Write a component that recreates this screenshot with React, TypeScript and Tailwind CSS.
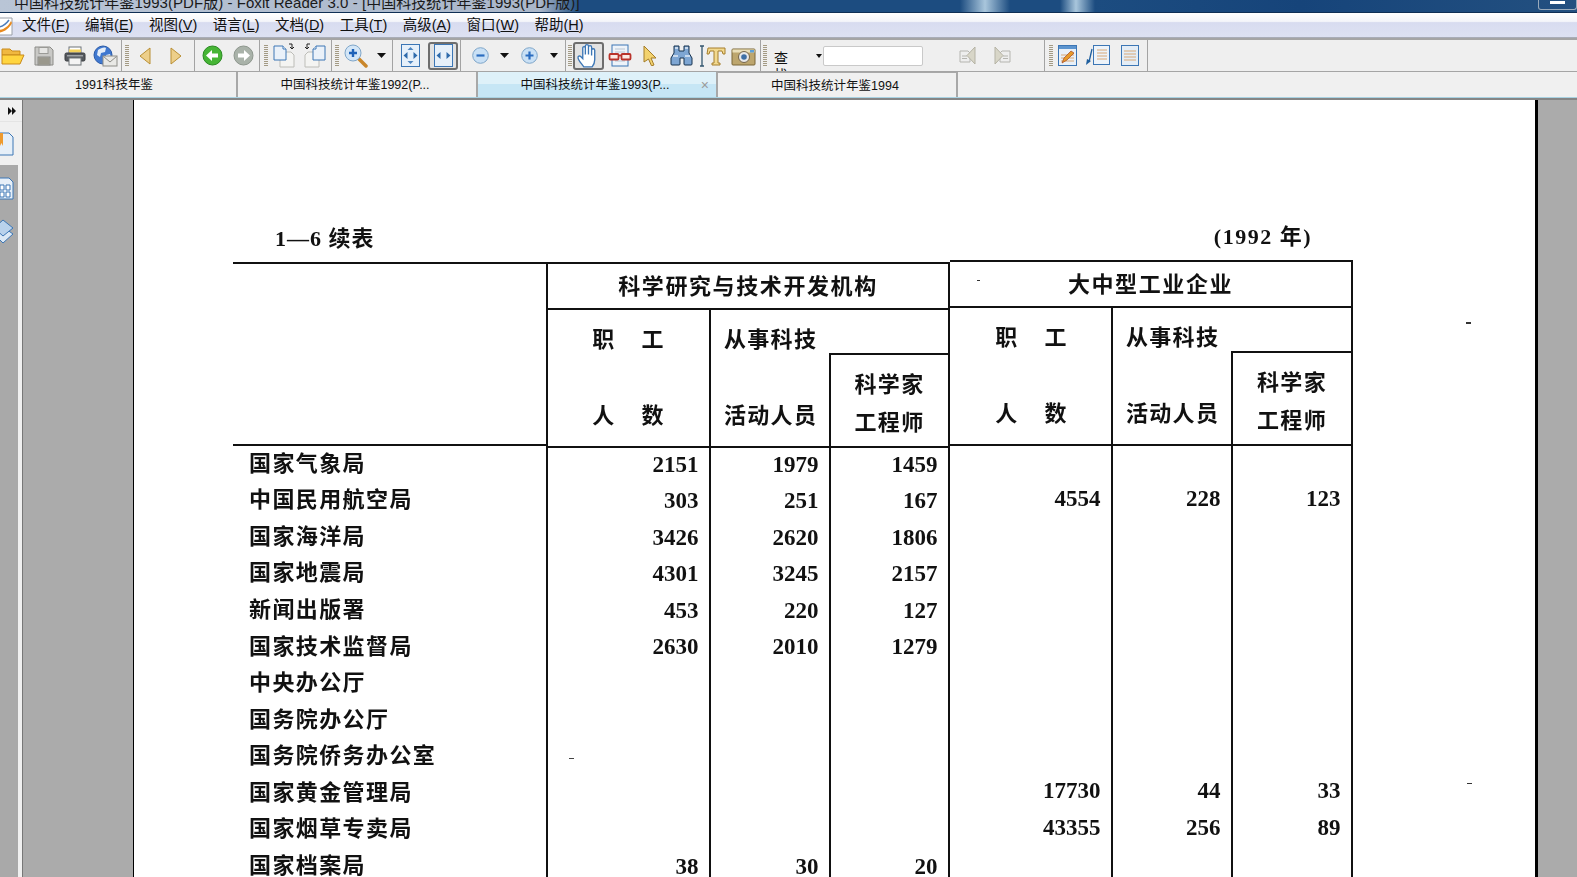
import React from "react";

const UI_FONT = "font-['Liberation_Sans','Noto_Sans_CJK_SC',sans-serif]";
const SCAN_FONT = "font-['Liberation_Serif','Noto_Sans_CJK_SC',serif]";

const menus = [
  ["文件", "F"],
  ["编辑", "E"],
  ["视图", "V"],
  ["语言", "L"],
  ["文档", "D"],
  ["工具", "T"],
  ["高级", "A"],
  ["窗口", "W"],
  ["帮助", "H"],
];

const rows = [
  ["国家气象局", "2151", "1979", "1459", "", "", ""],
  ["中国民用航空局", "303", "251", "167", "4554", "228", "123"],
  ["国家海洋局", "3426", "2620", "1806", "", "", ""],
  ["国家地震局", "4301", "3245", "2157", "", "", ""],
  ["新闻出版署", "453", "220", "127", "", "", ""],
  ["国家技术监督局", "2630", "2010", "1279", "", "", ""],
  ["中央办公厅", "", "", "", "", "", ""],
  ["国务院办公厅", "", "", "", "", "", ""],
  ["国务院侨务办公室", "", "", "", "", "", ""],
  ["国家黄金管理局", "", "", "", "17730", "44", "33"],
  ["国家烟草专卖局", "", "", "", "43355", "256", "89"],
  ["国家档案局", "38", "30", "20", "", "", ""],
];

const Sep = ({ className = "" }: { className?: string }) => (
  <div className={`w-px h-full bg-[#a3a3a3] shrink-0 ${className}`} />
);

const Grip = ({ className = "" }: { className?: string }) => (
  <div
    className={`w-[4px] h-[21px] shrink-0 bg-[repeating-linear-gradient(to_bottom,#a39a84_0,#a39a84_1px,transparent_1px,transparent_2px)] ${className}`}
  />
);

const Slot = ({
  className,
  children,
}: {
  className: string;
  children?: React.ReactNode;
}) => (
  <div className={`h-full shrink-0 flex items-center justify-center ${className}`}>
    {children}
  </div>
);

const Caret = ({ small }: { small?: boolean }) => (
  <svg width={small ? 6 : 9} height={small ? 4 : 5} viewBox="0 0 9 5" preserveAspectRatio="none">
    <path d="M0 0h9L4.500 5z" fill="#111" />
  </svg>
);

const Folder = () => (
  <svg width="24" height="20" viewBox="0 0 24 20">
    <path d="M1 3h8l2 2h8v4H1z" fill="#f0b840" stroke="#c98a1a" />
    <path d="M1 18V9h22l-4 9z" fill="#ffd53f" stroke="#c98a1a" />
  </svg>
);

const Save = () => (
  <svg width="20" height="20" viewBox="0 0 20 20">
    <path d="M1 1h15l3 3v15H1z" fill="#c9c9c6" stroke="#8c8c88" />
    <rect x="5" y="1.500" width="9" height="6" fill="#e6e6e4" stroke="#9a9a96" />
    <rect x="4" y="11" width="12" height="8" fill="#a9a79b" stroke="#8c8c88" />
    <path d="M5 13h10M5 15h10M5 17h10" stroke="#8b897e" />
  </svg>
);

const Printer = () => (
  <svg width="22" height="20" viewBox="0 0 22 20">
    <rect x="5" y="1" width="12" height="7" fill="#fff" stroke="#6f7478" />
    <rect x="5" y="3.500" width="12" height="3" fill="#f4d25a" />
    <rect x="1" y="7" width="20" height="8" rx="1.500" fill="#55595e" stroke="#3a3d40" />
    <rect x="3" y="9" width="16" height="1.500" fill="#9ea2a6" />
    <rect x="5" y="12" width="12" height="7" fill="#f4f4f4" stroke="#6f7478" />
  </svg>
);

const GlobeMail = () => (
  <svg width="25" height="22" viewBox="0 0 25 22">
    <circle cx="10" cy="10" r="9" fill="#3f78d0" stroke="#2a5aa8" />
    <path d="M5 5c3-2 6-3 8-2l-1 4-4 1-1 4-3-2zM13 10l4-1 1 4-3 3-2-2z" fill="#e4edf8" />
    <rect x="10" y="11" width="14" height="10" fill="#e9e9e6" stroke="#8d8d88" />
    <path d="M10.500 11.500L17 17l6.500-5.500" fill="none" stroke="#8d8d88" />
  </svg>
);

const Tri = ({ dir }: { dir: "l" | "r" }) => (
  <svg width="12" height="18" viewBox="0 0 12 18">
    <path
      d={dir === "l" ? "M11 1v16L1 9z" : "M1 1v16l10-8z"}
      fill="#edcf8a"
      stroke="#b98f35"
    />
  </svg>
);

const RoundArrow = ({ dir, fill, edge }: { dir: "l" | "r"; fill: string; edge: string }) => (
  <svg width="21" height="21" viewBox="0 0 21 21">
    <circle cx="10.500" cy="10.500" r="9.500" fill={fill} stroke={edge} />
    <path
      d={dir === "l" ? "M4 10.500L10 5v3.500h6v4h-6V16z" : "M17 10.500L11 5v3.500H5v4h6V16z"}
      fill="#fff"
    />
  </svg>
);

const PagePair = ({ flip }: { flip?: boolean }) => (
  <svg width="22" height="25" viewBox="0 0 22 25">
    <g transform={flip ? "translate(22 0) scale(-1 1)" : undefined}>
      <path d="M7 9h11l3 3v12H7z" fill="#f4f4f2" stroke="#bdbdb8" />
      <path d="M1 3h9l3 3v11H1z" fill="#eaf1f9" stroke="#3c76b5" />
      <path d="M10 3v3h3" fill="#fff" stroke="#3c76b5" />
      <path d="M16 1h3v4M17 4l2 2 2-2" fill="none" stroke="#222" />
    </g>
  </svg>
);

const ZoomGlass = () => (
  <svg width="24" height="24" viewBox="0 0 24 24">
    <path d="M14 14l8 8" stroke="#c9862a" strokeWidth="3.500" strokeLinecap="round" />
    <circle cx="9" cy="9" r="8" fill="#d3e6f7" stroke="#7fa6c9" />
    <path d="M9 5v8M5 9h8" stroke="#1e62b8" strokeWidth="2.400" />
  </svg>
);

const Fit = ({ vertical }: { vertical?: boolean }) => (
  <svg width="19" height="23" viewBox="0 0 19 23">
    <rect x="0.500" y="0.500" width="18" height="22" fill="#e6f0fa" stroke="#3c76b5" />
    {vertical && <path d="M9.500 3l3 3h-6zM9.500 20l3-3h-6z" fill="#4f86c0" />}
    <path d="M2.500 11.500l4-3.500v7zM16.500 11.500l-4-3.500v7z" fill="#2e6aab" />
  </svg>
);

const RoundSign = ({ plus }: { plus?: boolean }) => (
  <svg width="17" height="17" viewBox="0 0 17 17">
    <circle cx="8.500" cy="8.500" r="7.800" fill="#c9e0f5" stroke="#7fa6c9" />
    <path d={plus ? "M8.500 4.500v8M4.500 8.500h8" : "M4.500 8.500h8"} stroke="#2a6cc0" strokeWidth="2.200" />
  </svg>
);

const Hand = () => (
  <svg width="26" height="26" viewBox="0 0 24 25">
    <path
      d="M7 23c-2-3-5-6-5.500-8.500C1 12.500 3 12 4 13l2 2V5c0-2 2.500-2 2.500 0v6V3c0-2 3-2 3 0v8V4c0-2 3-2 3 0v8V7c0-2 3-2 3 0v9c0 3-1 5-2.500 7z"
      fill="#fff"
      stroke="#3c76b5"
      strokeWidth="1.300"
    />
  </svg>
);

const Glasses = () => (
  <svg width="24" height="23" viewBox="0 0 24 23">
    <rect x="4" y="1" width="16" height="21" fill="#eef3f9" stroke="#3c76b5" />
    <path d="M7 5h10M7 8h10M7 17h10" stroke="#b8c4d2" />
    <rect x="1.500" y="10" width="9" height="5.500" rx="1" fill="#fbe9e4" stroke="#b9332b" strokeWidth="1.800" />
    <rect x="13.500" y="10" width="9" height="5.500" rx="1" fill="#fbe9e4" stroke="#b9332b" strokeWidth="1.800" />
    <path d="M10 11.500h4" stroke="#b9332b" strokeWidth="1.800" />
  </svg>
);

const Pointer = () => (
  <svg width="14" height="21" viewBox="0 0 14 21">
    <path d="M1 1l12 12H8l3 7-2.500 0.800L5.500 14 1 17z" fill="#f3d26e" stroke="#a47c28" />
  </svg>
);

const Binoculars = () => (
  <svg width="23" height="21" viewBox="0 0 23 21">
    <path d="M4 1h5v5h5V1h5v7l3 5v6a1 1 0 0 1-1 1h-6a1 1 0 0 1-1-1v-6H10v6a1 1 0 0 1-1 1H2a1 1 0 0 1-1-1v-6l3-5z" fill="#7ea6d3" stroke="#17324f" />
    <path d="M3 11h5M15 11h5M5 3h3M15 3h3" stroke="#e2ecf7" strokeWidth="1.500" />
  </svg>
);

const TextTool = () => (
  <svg width="27" height="22" viewBox="0 0 27 22">
    <path d="M1 1h4M1 21h4M3 1v20" stroke="#33566f" strokeWidth="1.300" fill="none" />
    <path d="M9 3h17v6h-2l-1-3h-4v12h2v2H13v-2h2V6h-4l-1 3H8z" fill="#f2d98f" stroke="#a67f2d" />
  </svg>
);

const Camera = () => (
  <svg width="25" height="20" viewBox="0 0 25 20">
    <rect x="1" y="3" width="23" height="16" rx="1" fill="#bda66e" stroke="#7a6738" />
    <rect x="1.500" y="3.500" width="22" height="3" fill="#eadfba" />
    <circle cx="13" cy="11" r="5.500" fill="#e8e8e8" stroke="#76664a" />
    <circle cx="13" cy="11" r="2.800" fill="#3f6fa5" />
    <rect x="19" y="4" width="4" height="2.500" fill="#5da0d8" />
  </svg>
);

const NavPage = ({ flip }: { flip?: boolean }) => (
  <svg width="17" height="19" viewBox="0 0 17 19">
    <g transform={flip ? "translate(17 0) scale(-1 1)" : undefined}>
      <path d="M1 5h8l2 2v9H1z" fill="#eee" stroke="#b5b5b0" />
      <path d="M3 10h5M3 12.500h5" stroke="#b5b5b0" />
      <path d="M16 1v17L8 9.500z" fill="#d8d6c8" stroke="#b5b3a5" />
    </g>
  </svg>
);

const NoteEdit = () => (
  <svg width="19" height="21" viewBox="0 0 19 21">
    <rect x="0.500" y="0.500" width="18" height="20" fill="#e8f0f8" stroke="#3c76b5" />
    <rect x="1" y="1" width="17" height="3" fill="#5d95cf" />
    <path d="M3 10h13M3 13h13M3 16h13" stroke="#d9a877" />
    <path d="M4 18l2-5 7-7 3 2-7 7z" fill="#e79a2a" stroke="#a5471f" strokeWidth="0.700" />
  </svg>
);

const NoteArrow = () => (
  <svg width="24" height="21" viewBox="0 0 24 21">
    <rect x="7.500" y="0.500" width="16" height="19" fill="#edf3f9" stroke="#3c76b5" />
    <path d="M11 5h10M11 8h10M11 11h10M11 14h10" stroke="#d9a877" />
    <path d="M6 4L3 17" stroke="#1f5f9e" strokeWidth="1.300" />
    <path d="M0 20l1-6 4 2z" fill="#1f5f9e" />
  </svg>
);

const NoteLines = () => (
  <svg width="18" height="21" viewBox="0 0 18 21">
    <rect x="0.500" y="0.500" width="17" height="20" fill="#e4edf6" stroke="#3c76b5" />
    <path d="M3 6h12M3 9h12M3 12h12M3 15h12" stroke="#d9a877" />
  </svg>
);

const Toolbar = () => (
  <div className="h-[33px] shrink-0 flex items-stretch bg-[#efefef] border-t-2 border-[#a5a5a5] overflow-hidden">
    <div className="flex items-center h-full -ml-[3px]">
      <Slot className="w-[31px]"><Folder /></Slot>
      <Slot className="w-[31px]"><Save /></Slot>
      <Slot className="w-[31px]"><Printer /></Slot>
      <Slot className="w-[31px]"><GlobeMail /></Slot>
      <Sep />
      <Slot className="w-[3px]" />
      <Grip />
      <Slot className="w-[31px]"><Tri dir="l" /></Slot>
      <Slot className="w-[31px]"><Tri dir="r" /></Slot>
      <Slot className="w-[3px]" />
      <Sep />
      <Slot className="w-[2px]" />
      <Slot className="w-[31px]"><RoundArrow dir="l" fill="#46b535" edge="#2a8a22" /></Slot>
      <Slot className="w-[31px]"><RoundArrow dir="r" fill="#a9b2a9" edge="#8d968d" /></Slot>
      <Sep />
      <Slot className="w-[4px]" />
      <Grip />
      <Slot className="w-[31px]"><PagePair /></Slot>
      <Slot className="w-[31px]"><PagePair flip /></Slot>
      <Slot className="w-px" />
      <Sep />
      <Slot className="w-[3px]" />
      <Grip />
      <Slot className="w-[34px]"><ZoomGlass /></Slot>
      <Slot className="w-[16px]"><Caret /></Slot>
      <Slot className="w-[3px]" />
      <Sep />
      <Slot className="w-[35px]"><Fit vertical /></Slot>
      <div className="w-[30px] h-[28px] shrink-0 flex items-center justify-center rounded-[3px] border-2 border-[#6e6e6e] bg-[#e2e2e2]">
        <Fit />
      </div>
      <Slot className="w-[2px]" />
      <Sep />
      <Slot className="w-[38px]"><RoundSign /></Slot>
      <Slot className="w-[10px]"><Caret /></Slot>
      <Slot className="w-[41px]"><RoundSign plus /></Slot>
      <Slot className="w-[8px]"><Caret /></Slot>
      <Slot className="w-[7px]" />
      <Sep />
      <Slot className="w-[2px]" />
      <Grip />
      <Slot className="w-px" />
      <div className="w-[31px] h-[28px] shrink-0 flex items-center justify-center rounded-[3px] border-2 border-[#6e6e6e] bg-[#e2e2e2]">
        <Hand />
      </div>
      <Slot className="w-[32px]"><Glasses /></Slot>
      <Slot className="w-[28px]"><Pointer /></Slot>
      <Slot className="w-[34px]"><Binoculars /></Slot>
      <Slot className="w-[28px]"><TextTool /></Slot>
      <Slot className="w-[34px]"><Camera /></Slot>
      <Sep />
      <Slot className="w-[2px]" />
      <Grip />
      <Slot className="w-[7px]" />
      <div className="w-[14px] h-[21px] shrink-0 self-end overflow-hidden text-[14px] leading-[17px] text-[#111]">
        查找
      </div>
      <Slot className="w-[27px]" />
      <Slot className="w-[8px]"><Caret small /></Slot>
      <div className="w-[100px] h-[20px] shrink-0 bg-white border border-[#c9c9c9] rounded-[2px]" />
      <Slot className="w-[29px]" />
      <Slot className="w-[30px]"><NavPage /></Slot>
      <Slot className="w-[5px]" />
      <Slot className="w-[30px]"><NavPage flip /></Slot>
      <Slot className="w-[27px]" />
      <Sep />
      <Slot className="w-[4px]" />
      <Grip />
      <Slot className="w-[28px]"><NoteEdit /></Slot>
      <Slot className="w-[34px]"><NoteArrow /></Slot>
      <Slot className="w-[30px]"><NoteLines /></Slot>
      <Slot className="w-[2px]" />
      <Sep />
    </div>
  </div>
);

const Tab = ({
  label,
  className,
  active,
}: {
  label: string;
  className: string;
  active?: boolean;
}) => (
  <div
    className={`relative h-full shrink-0 flex items-center justify-center pt-[2px] text-[12.5px] text-[#111] border-r-2 border-[#a8a8a8] ${
      active ? "bg-[linear-gradient(to_bottom,#def1f9_0,#def1f9_50%,#c6e6f5_50%,#c6e6f5_100%)]" : "bg-[#f0f0f0]"
    } ${className}`}
  >
    {label}
    {active && (
      <span className="absolute right-[7px] top-[6px] text-[14px] leading-[14px] text-[#9a9a9a]">×</span>
    )}
  </div>
);

const Tabs = () => (
  <div className="h-[26px] shrink-0 flex bg-[#f0f0f0] border-t border-[#a5a5a5]">
    <Tab className="w-[238px] pr-[8px]" label="1991科技年鉴" />
    <Tab className="w-[240px] pr-[4px]" label="中国科技统计年鉴1992(P..." />
    <Tab className="w-[240px] pr-[4px]" label="中国科技统计年鉴1993(P..." active />
    <Tab className="w-[240px] pr-[4px] border-t border-t-[#a8a8a8]" label="中国科技统计年鉴1994" />
  </div>
);

const Sidebar = () => (
  <div className="w-[23px] shrink-0 flex flex-col bg-[#f0f0f0] border-r border-[#777]">
    <div className="h-[22px] shrink-0 flex items-center justify-end pr-[6px] border-b border-[#e4e4e4]">
      <svg width="8" height="8" viewBox="0 0 8 8">
        <path d="M0 0l4 4-4 4zM4 0l4 4-4 4z" fill="#111" />
      </svg>
    </div>
    <div className="h-[43px] shrink-0 overflow-hidden flex items-start">
      <svg width="14" height="24" viewBox="0 0 14 24" className="mt-[10px]">
        <path d="M-8 1h17l4 4v18H-8z" fill="#e6eff8" stroke="#3c76b5" />
        <path d="M0 1h3v13L1.500 11 0 14z" fill="#ee9a2e" />
      </svg>
    </div>
    <div className="flex-1 w-[18px] bg-[#a9a9a9] overflow-hidden flex flex-col items-start">
      <svg width="14" height="23" viewBox="0 0 14 23" className="mt-[12px] shrink-0">
        <path d="M-8 1h17l4 4v17H-8z" fill="#e6eff8" stroke="#3c76b5" />
        <path d="M0 8h4v5H0zM6 8h4v5H6zM0 15h4v5H0zM6 15h4v5H6z" fill="#fff" stroke="#3c76b5" />
      </svg>
      <svg width="14" height="25" viewBox="0 0 14 25" className="mt-[19px] shrink-0">
        <path d="M-6 15L3 8l10 7-10 9z" fill="#dbe8f5" stroke="#3c76b5" />
        <path d="M-6 9l9-8 10 8-10 8z" fill="#b9d2ec" stroke="#3c76b5" />
      </svg>
    </div>
  </div>
);

const Cell = ({ value }: { value: string }) => (
  <div className="h-[36.55px] border-r-2 border-[#111] flex items-center justify-end pr-[10.5px] pb-[3px] text-[23px]">
    {value}
  </div>
);

const Section = ({
  title,
  className,
  cols,
  first,
  values,
}: {
  title: string;
  className: string;
  cols: string;
  first: string;
  values: string[][];
}) => (
  <div className={`shrink-0 ${className}`}>
    <div className="h-[48px] border-t-2 border-b-2 border-r-2 border-[#111] flex items-center justify-center text-[22px] tracking-[1.6px] font-bold">
      {title}
    </div>
    <div className={`grid grid-rows-[43px_93px] border-b-2 border-[#111] text-[22px] tracking-[1.3px] font-bold leading-[24px] ${cols}`}>
      <div className={`row-span-2 border-r-2 border-[#111] pt-[18px] flex flex-col gap-[52px] ${first}`}>
        <div className="flex justify-center gap-[26px]">
          <span>职</span>
          <span>工</span>
        </div>
        <div className="flex justify-center gap-[26px]">
          <span>人</span>
          <span>数</span>
        </div>
      </div>
      <div className="col-span-2 border-r-2 border-[#111] pl-[13px] pt-[18px]">从事科技</div>
      <div className="border-r-2 border-[#111] pl-[13px] pt-[51px]">活动人员</div>
      <div className="border-t-2 border-r-2 border-[#111] pt-[11px] text-center leading-[38px]">
        科学家
        <br />
        工程师
      </div>
    </div>
    <div className={`grid font-bold ${cols}`}>
      {values.flat().map((v, i) => (
        <Cell key={i} value={v} />
      ))}
    </div>
  </div>
);

const Page = () => (
  <div className={`relative ml-[110px] w-[1405px] h-full shrink-0 bg-white border-l border-r-[3px] border-black pl-[99px] ${SCAN_FONT} text-[#111] blur-[0.3px]`}>
    <div className="w-[1119px] h-[160px] pt-[126px] flex justify-between font-bold">
      <div className="pl-[42px] text-[22px] leading-[26px] tracking-[1px]">1—6 续表</div>
      <div className="pr-[40px] text-[22px] leading-[22px] tracking-[1.5px]">(1992 年)</div>
    </div>
    <div className="flex items-start">
      <div className="w-[313px] shrink-0 pt-[2px]">
        <div className="h-[184px] border-t-2 border-b-2 border-[#111]" />
        <div className="font-bold text-[22px] tracking-[1.4px] pl-[16px]">
          {rows.map((r) => (
            <div key={r[0]} className="h-[36.55px] pb-[2px] flex items-center">
              {r[0]}
            </div>
          ))}
        </div>
      </div>
      <div className="shrink-0 pt-[2px]">
        <Section
          title="科学研究与技术开发机构"
          className="border-l-2 border-[#111]"
          cols="grid-cols-[163px_120px_119px]"
          first=""
          values={rows.map((r) => r.slice(1, 4))}
        />
      </div>
      <Section
        title="大中型工业企业"
        className=""
        cols="grid-cols-[163px_120px_120px]"
        first="pl-[2px]"
        values={rows.map((r) => r.slice(4, 7))}
      />
    </div>
    <span className="absolute left-[843px] top-[180px] w-[3px] h-px bg-[#333]" />
    <span className="absolute left-[435px] top-[658px] w-[5px] h-px bg-[#444]" />
    <span className="absolute left-[1332px] top-[222px] w-[5px] h-[2px] bg-[#333]" />
    <span className="absolute left-[1333px] top-[683px] w-[5px] h-px bg-[#333]" />
  </div>
);

export default function App() {
  return (
    <div className={`w-[1577px] h-[877px] overflow-hidden flex flex-col bg-[#ababab] ${UI_FONT}`}>
      <div className="h-[13px] shrink-0 overflow-hidden relative bg-[linear-gradient(to_right,#b9c5d6_0,#aab7ca_540px,#1c4c80_580px,#1c4c80_960px,#a9c6dc_985px,#1c4c80_1010px,#1c4c80_1060px,#a9c6dc_1076px,#1c4c80_1095px,#16447a_1300px,#235080_1577px)] border-b border-[#0f2f55]">
        <div className="-mt-[6px] pl-[14px] text-[15px] leading-[17px] tracking-[0.05px] whitespace-nowrap text-[#1a1a1a]">
          中国科技统计年鉴1993(PDF版) - Foxit Reader 3.0 - [中国科技统计年鉴1993(PDF版)]
        </div>
        <div className="absolute right-0 top-0 w-[39px] h-[10px] border border-t-0 border-[#9ab] rounded-b-[3px] flex justify-center">
          <div className="w-[15px] h-[3px] mt-[1px] bg-white" />
        </div>
      </div>
      <div className="h-[25px] shrink-0 flex items-center pt-[2px] text-[14.5px] text-[#111] bg-[linear-gradient(to_bottom,#ffffff_0,#f4f5fa_35%,#d8dcf0_40%,#dde1f2_100%)] border-b border-[#a9adb8]">
        <svg width="14" height="21" viewBox="0 0 14 21" className="shrink-0">
          <path d="M-6 2h18v17H-6z" fill="#fff" stroke="#9aa0a8" />
          <path d="M-2 14c5 0 10-3 13-9l1 2c-3 6-8 9-14 10z" fill="#e98a1f" />
          <path d="M-2 11c5 0 8-3 11-7" stroke="#4b7dbd" strokeWidth="1.500" fill="none" />
        </svg>
        <div className="flex items-center gap-[15.5px] ml-[8px]">
          {menus.map(([label, key]) => (
            <span key={key} className="whitespace-nowrap">
              {label}(<span className="underline">{key}</span>)
            </span>
          ))}
        </div>
      </div>
      <Toolbar />
      <Tabs />
      <div className="h-[3px] shrink-0 border-t border-[#a9d2e2] bg-[#858585]" />
      <div className="flex-1 min-h-0 flex overflow-hidden">
        <Sidebar />
        <Page />
      </div>
    </div>
  );
}
